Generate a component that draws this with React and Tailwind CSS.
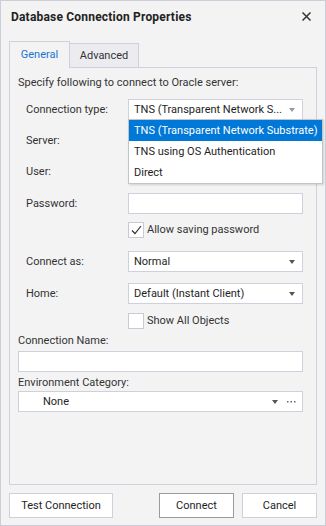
import { useState } from 'react';

const font = "font-['Segoe_UI',Roboto,sans-serif]";

function Arrow({ color = 'border-t-[#555]' }) {
  return (
    <span
      className={`inline-block w-0 h-0 border-l-[3.5px] border-r-[3.5px] border-t-[4px] border-l-transparent border-r-transparent ${color}`}
    />
  );
}

function Select({ value, dim }) {
  return (
    <div className="w-[175px] h-[21px] bg-white border border-[#cfd0dc] flex items-center pl-[5px] pr-[7px]">
      <span className="flex-1 whitespace-nowrap overflow-hidden text-[#1e1e1e]">{value}</span>
      <Arrow color={dim ? 'border-t-[#9a9a9a]' : 'border-t-[#555]'} />
    </div>
  );
}

function Input({ wide }) {
  return (
    <div
      className={`${wide ? 'w-[285px]' : 'w-[175px]'} h-[21px] bg-white border border-[#cfd0dc]`}
    />
  );
}

function Checkbox({ checked, label }) {
  return (
    <div className="flex items-center h-[17px] ml-[110px]">
      <div className="w-[16px] h-[16px] bg-white border border-[#c9cad6] flex items-center justify-center">
        {checked && (
          <svg width="11" height="10" viewBox="0 0 11 10">
            <path d="M1 5.5 L4 8.5 L10 1" fill="none" stroke="#333" strokeWidth="1.2" />
          </svg>
        )}
      </div>
      <span className="ml-[3px] text-[#333]">{label}</span>
    </div>
  );
}

function Row({ label, children, className = '' }) {
  return (
    <div className={`flex items-center h-[21px] ${className}`}>
      <span className="w-[110px] pl-[8px] text-[#333]">{label}</span>
      {children}
    </div>
  );
}

export default function App() {
  const [tab] = useState('general');
  const options = [
    'TNS (Transparent Network Substrate)',
    'TNS using OS Authentication',
    'Direct',
  ];

  return (
    <div
      className={`${font} text-[11px] leading-[16px] w-[326px] h-[526px] bg-[#f3f3f3] border border-[#cdcdd9] flex flex-col overflow-hidden`}
    >
      {/* title bar */}
      <div className="h-[30px] flex items-center justify-between pl-[10px] pr-[14px] pt-[1px]">
        <span className="font-bold text-[#222] text-[12px] tracking-[0.2px]">Database Connection Properties</span>
        <svg width="9" height="9" viewBox="0 0 9 9">
          <path d="M0.5 0.5 L8.5 8.5 M8.5 0.5 L0.5 8.5" stroke="#333" strokeWidth="1.5" />
        </svg>
      </div>

      {/* tabs */}
      <div className="flex items-end pl-[8px] mt-[9px] h-[27px]">
        <div
          className={`h-[27px] w-[61px] border border-b-0 border-[#cfd0dc] bg-[#f3f3f3] flex items-center justify-center relative top-[1px] ${
            tab === 'general' ? 'text-[#1a73d1]' : ''
          }`}
        >
          General
        </div>
        <div className="h-[24px] w-[69px] border border-l-0 border-b-0 border-[#cfd0dc] bg-[#ececf0] flex items-center justify-center text-[#333]">
          Advanced
        </div>
      </div>

      {/* panel */}
      <div className="mx-[8px] w-[308px] h-[418px] border border-[#cfd0dc] flex flex-col pl-[8px] pt-[7px]">
        <div className="text-[#333]">Specify following to connect to Oracle server:</div>

        <div className="relative mt-[8px]">
          <Row label="Connection type:">
            <Select value="TNS (Transparent Network S..." dim />
          </Row>
          <div className="absolute left-[110px] top-[20px] w-[195px] bg-white border border-[#c4c4c4] shadow-[1px_1px_2px_rgba(0,0,0,0.15)] z-10">
            {options.map((o, i) => (
              <div
                key={o}
                className={`h-[21px] flex items-center pl-[5px] whitespace-nowrap overflow-hidden ${
                  i === 0 ? 'bg-[#0078d7] text-white' : 'text-[#1e1e1e]'
                }`}
              >
                {o}
              </div>
            ))}
          </div>
        </div>

        <Row label="Server:" className="mt-[10px]">
          <Input />
        </Row>
        <Row label="User:" className="mt-[10px]">
          <Input />
        </Row>
        <Row label="Password:" className="mt-[11px]">
          <Input />
        </Row>
        <div className="mt-[7px]">
          <Checkbox checked label="Allow saving password" />
        </div>
        <Row label="Connect as:" className="mt-[13px]">
          <Select value="Normal" />
        </Row>
        <Row label="Home:" className="mt-[11px]">
          <Select value="Default (Instant Client)" />
        </Row>
        <div className="mt-[8px]">
          <Checkbox label="Show All Objects" />
        </div>

        <div className="mt-[4px] text-[#333]">Connection Name:</div>
        <div className="mt-[2px]">
          <Input wide />
        </div>
        <div className="mt-[3px] text-[#333]">Environment Category:</div>
        <div className="mt-[0px] w-[285px] h-[21px] bg-white border border-[#cfd0dc] flex items-center pl-[24px] pr-[6px]">
          <span className="flex-1 text-[#1e1e1e]">None</span>
          <Arrow />
          <svg className="ml-[9px]" width="9" height="3" viewBox="0 0 9 3">
            <rect x="0" y="1" width="1.5" height="1.5" fill="#666" />
            <rect x="3.5" y="1" width="1.5" height="1.5" fill="#666" />
            <rect x="7" y="1" width="1.5" height="1.5" fill="#666" />
          </svg>
        </div>
      </div>

      {/* buttons */}
      <div className="flex items-center mt-[8px] px-[8px]">
        <button className="w-[104px] h-[25px] bg-white border border-[#cfd0dc] text-[#1e1e1e]">
          Test Connection
        </button>
        <div className="flex-1" />
        <button className="w-[75px] h-[25px] bg-white border border-[#9a9a9a] text-[#1e1e1e]">
          Connect
        </button>
        <button className="ml-[8px] w-[75px] h-[25px] bg-white border border-[#cfd0dc] text-[#1e1e1e]">
          Cancel
        </button>
      </div>
    </div>
  );
}
